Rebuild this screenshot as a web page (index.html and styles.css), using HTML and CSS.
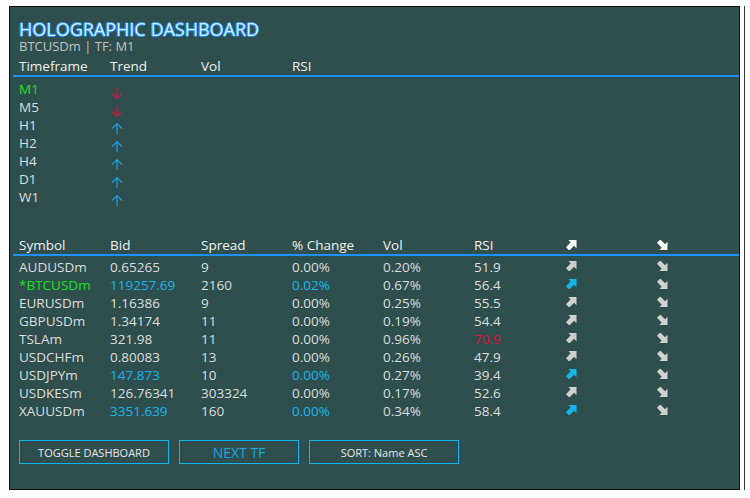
FILE: index.html
```html
<!DOCTYPE html>
<html>
<head>
<meta charset="utf-8">
<link rel="stylesheet" href="styles.css">
</head>
<body>
<div class="panel">
  <div class="title">HOLOGRAPHIC DASHBOARD</div>
  <div class="subtitle">BTCUSDm | TF: M1</div>

  <div class="row head tf">
    <span>Timeframe</span><span>Trend</span><span>Vol</span><span>RSI</span>
  </div>
  <div class="tf-rows">
    <div class="row tf"><span class="green">M1</span><span><svg class="tr dn" viewBox="0 0 12 11"><path d="M6 0V10.3M1 5.3L6 10.3L11 5.3"/></svg></span></div>
    <div class="row tf"><span>M5</span><span><svg class="tr dn" viewBox="0 0 12 11"><path d="M6 0V10.3M1 5.3L6 10.3L11 5.3"/></svg></span></div>
    <div class="row tf"><span>H1</span><span><svg class="tr up" viewBox="0 0 12 11"><path d="M6 11V0.7M1 5.7L6 0.7L11 5.7"/></svg></span></div>
    <div class="row tf"><span>H2</span><span><svg class="tr up" viewBox="0 0 12 11"><path d="M6 11V0.7M1 5.7L6 0.7L11 5.7"/></svg></span></div>
    <div class="row tf"><span>H4</span><span><svg class="tr up" viewBox="0 0 12 11"><path d="M6 11V0.7M1 5.7L6 0.7L11 5.7"/></svg></span></div>
    <div class="row tf"><span>D1</span><span><svg class="tr up" viewBox="0 0 12 11"><path d="M6 11V0.7M1 5.7L6 0.7L11 5.7"/></svg></span></div>
    <div class="row tf"><span>W1</span><span><svg class="tr up" viewBox="0 0 12 11"><path d="M6 11V0.7M1 5.7L6 0.7L11 5.7"/></svg></span></div>
  </div>

  <div class="row head sym hd2">
    <span>Symbol</span><span>Bid</span><span>Spread</span><span>% Change</span><span>Vol</span><span>RSI</span>
    <span><svg class="ic w" viewBox="0 0 11 11"><path d="M2 0H11V9L8.4 6.4L3 11.6L-0.6 8L4.6 2.6Z"/></svg></span>
    <span><svg class="ic w r" viewBox="0 0 11 11"><path d="M2 11H11V2L8.4 4.6L3 -0.6L-0.6 3L4.6 8.4Z"/></svg></span>
  </div>
  <div class="sym-rows">
    <div class="row sym"><span>AUDUSDm</span><span>0.65265</span><span>9</span><span>0.00%</span><span>0.20%</span><span>51.9</span><span><svg class="ic g" viewBox="0 0 11 11"><path d="M2 0H11V9L8.4 6.4L3 11.6L-0.6 8L4.6 2.6Z"/></svg></span><span><svg class="ic g r" viewBox="0 0 11 11"><path d="M2 11H11V2L8.4 4.6L3 -0.6L-0.6 3L4.6 8.4Z"/></svg></span></div>
    <div class="row sym"><span class="green">*BTCUSDm</span><span class="blue">119257.69</span><span>2160</span><span class="blue">0.02%</span><span>0.67%</span><span>56.4</span><span><svg class="ic b" viewBox="0 0 11 11"><path d="M2 0H11V9L8.4 6.4L3 11.6L-0.6 8L4.6 2.6Z"/></svg></span><span><svg class="ic g r" viewBox="0 0 11 11"><path d="M2 11H11V2L8.4 4.6L3 -0.6L-0.6 3L4.6 8.4Z"/></svg></span></div>
    <div class="row sym"><span>EURUSDm</span><span>1.16386</span><span>9</span><span>0.00%</span><span>0.25%</span><span>55.5</span><span><svg class="ic g" viewBox="0 0 11 11"><path d="M2 0H11V9L8.4 6.4L3 11.6L-0.6 8L4.6 2.6Z"/></svg></span><span><svg class="ic g r" viewBox="0 0 11 11"><path d="M2 11H11V2L8.4 4.6L3 -0.6L-0.6 3L4.6 8.4Z"/></svg></span></div>
    <div class="row sym"><span>GBPUSDm</span><span>1.34174</span><span>11</span><span>0.00%</span><span>0.19%</span><span>54.4</span><span><svg class="ic g" viewBox="0 0 11 11"><path d="M2 0H11V9L8.4 6.4L3 11.6L-0.6 8L4.6 2.6Z"/></svg></span><span><svg class="ic g r" viewBox="0 0 11 11"><path d="M2 11H11V2L8.4 4.6L3 -0.6L-0.6 3L4.6 8.4Z"/></svg></span></div>
    <div class="row sym"><span>TSLAm</span><span>321.98</span><span>11</span><span>0.00%</span><span>0.96%</span><span class="red">70.9</span><span><svg class="ic g" viewBox="0 0 11 11"><path d="M2 0H11V9L8.4 6.4L3 11.6L-0.6 8L4.6 2.6Z"/></svg></span><span><svg class="ic g r" viewBox="0 0 11 11"><path d="M2 11H11V2L8.4 4.6L3 -0.6L-0.6 3L4.6 8.4Z"/></svg></span></div>
    <div class="row sym"><span>USDCHFm</span><span>0.80083</span><span>13</span><span>0.00%</span><span>0.26%</span><span>47.9</span><span><svg class="ic g" viewBox="0 0 11 11"><path d="M2 0H11V9L8.4 6.4L3 11.6L-0.6 8L4.6 2.6Z"/></svg></span><span><svg class="ic g r" viewBox="0 0 11 11"><path d="M2 11H11V2L8.4 4.6L3 -0.6L-0.6 3L4.6 8.4Z"/></svg></span></div>
    <div class="row sym"><span>USDJPYm</span><span class="blue">147.873</span><span>10</span><span class="blue">0.00%</span><span>0.27%</span><span>39.4</span><span><svg class="ic b" viewBox="0 0 11 11"><path d="M2 0H11V9L8.4 6.4L3 11.6L-0.6 8L4.6 2.6Z"/></svg></span><span><svg class="ic g r" viewBox="0 0 11 11"><path d="M2 11H11V2L8.4 4.6L3 -0.6L-0.6 3L4.6 8.4Z"/></svg></span></div>
    <div class="row sym"><span>USDKESm</span><span>126.76341</span><span>303324</span><span>0.00%</span><span>0.17%</span><span>52.6</span><span><svg class="ic g" viewBox="0 0 11 11"><path d="M2 0H11V9L8.4 6.4L3 11.6L-0.6 8L4.6 2.6Z"/></svg></span><span><svg class="ic g r" viewBox="0 0 11 11"><path d="M2 11H11V2L8.4 4.6L3 -0.6L-0.6 3L4.6 8.4Z"/></svg></span></div>
    <div class="row sym"><span>XAUUSDm</span><span class="blue">3351.639</span><span>160</span><span class="blue">0.00%</span><span>0.34%</span><span>58.4</span><span><svg class="ic b" viewBox="0 0 11 11"><path d="M2 0H11V9L8.4 6.4L3 11.6L-0.6 8L4.6 2.6Z"/></svg></span><span><svg class="ic g r" viewBox="0 0 11 11"><path d="M2 11H11V2L8.4 4.6L3 -0.6L-0.6 3L4.6 8.4Z"/></svg></span></div>
  </div>

  <div class="buttons">
    <div class="btn wide">TOGGLE DASHBOARD</div>
    <div class="btn next">NEXT TF</div>
    <div class="btn wide">SORT: Name ASC</div>
  </div>
</div>
<div class="edge"></div>
</body>
</html>
```

FILE: styles.css
```css
html, body {
  margin: 0;
  background: #ffffff;
}
body {
  display: flex;
  align-items: flex-start;
  padding: 6px 0 0 9px;
  font-family: "Open Sans", "DejaVu Sans", sans-serif;
}
.panel {
  box-sizing: border-box;
  width: 731px;
  height: 484px;
  border: 1px solid #111;
  background: #2f4f4f;
  padding: 11px 0 0 3px;
  color: #dcdcdc;
}
.edge {
  width: 1px;
  height: 484px;
  margin-left: 4px;
  background: #3a3a3a;
}
.title {
  padding-left: 6px;
  font-size: 18px;
  line-height: 22px;
  height: 22px;
  color: #d2ecff;
  text-shadow: -1px 0 0 #1e90ff, 1px 0 0 #1e90ff, 0 -1px 0 #2a9cff, 0 1px 0 #1e90ff;
}
.subtitle {
  padding-left: 6px;
  font-size: 13px;
  line-height: 12px;
  height: 12px;
  color: #c0c0c0;
}
.row {
  display: grid;
  padding-left: 6px;
  height: 18px;
  font-size: 13.5px;
  line-height: 18px;
  white-space: nowrap;
}
.row.tf {
  grid-template-columns: 91px 91px 91px 91px;
}
.row.sym {
  grid-template-columns: repeat(8, 91px);
}
.row.head {
  color: #f0f0f0;
  border-bottom: 2px solid #1e90ff;
  margin-top: 5px;
}
.row.head.hd2 {
  margin-top: 30px;
}
.tf-rows {
  margin-top: 3px;
}
.sym-rows {
  margin-top: 2px;
}
.green { color: #18e018; }
.blue { color: #16b4ec; }
.red { color: #dc143c; }

.tr {
  width: 12px;
  height: 11px;
  margin-left: 1px;
  vertical-align: -5px;
  fill: none;
  stroke-width: 1.2;
}
.tr.dn { stroke: #dc143c; }
.tr.up { stroke: #1ca4e6; vertical-align: -4px; }

.ic {
  width: 11px;
  height: 10px;
  margin-left: 1px;
  vertical-align: 1px;
}
.head .ic { vertical-align: 0; }
.ic.w { fill: #ffffff; }
.ic.g { fill: #d0d0d0; }
.ic.b { fill: #16b4ec; }

.buttons {
  display: flex;
  gap: 10px;
  padding-left: 6px;
  margin-top: 20px;
}
.btn {
  box-sizing: border-box;
  height: 24px;
  border: 1px solid #10b4f0;
  display: flex;
  align-items: center;
  justify-content: center;
  font-size: 11px;
  color: #e6e6e6;
}
.btn.wide { width: 150px; }
.btn.next {
  width: 120px;
  font-size: 14px;
  color: #17a9e1;
}
```
